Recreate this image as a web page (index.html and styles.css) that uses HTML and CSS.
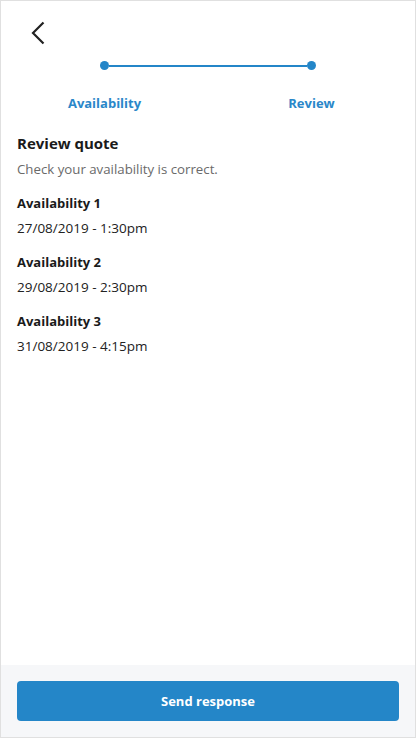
FILE: index.html
```html
<!DOCTYPE html>
<html lang="en">
<head>
<meta charset="utf-8">
<title>Review quote</title>
<link rel="stylesheet" href="styles.css">
</head>
<body>
<div class="page">
  <header class="header">
    <button class="back" aria-label="Back">
      <svg width="14" height="24" viewBox="0 0 14 24" aria-hidden="true">
        <path d="M12.5 1.5 L2 12 L12.5 22.5" fill="none" stroke="#222" stroke-width="2.2"/>
      </svg>
    </button>
    <div class="stepper">
      <span class="dot"></span>
      <span class="line"></span>
      <span class="dot"></span>
    </div>
    <div class="step-labels">
      <span class="step-label">Availability</span>
      <span class="step-label">Review</span>
    </div>
  </header>
  <main class="content">
    <h1 class="title">Review quote</h1>
    <p class="subtitle">Check your availability is correct.</p>
    <div class="list">
      <div class="item">
        <div class="item-title">Availability 1</div>
        <div class="item-date">27/08/2019 - 1:30pm</div>
      </div>
      <div class="item">
        <div class="item-title">Availability 2</div>
        <div class="item-date">29/08/2019 - 2:30pm</div>
      </div>
      <div class="item">
        <div class="item-title">Availability 3</div>
        <div class="item-date">31/08/2019 - 4:15pm</div>
      </div>
    </div>
  </main>
  <footer class="footer">
    <button class="send">Send response</button>
  </footer>
</div>
</body>
</html>
```

FILE: styles.css
```css
* { box-sizing: border-box; }
html, body { margin: 0; padding: 0; }
body {
  font-family: "Open Sans", "Noto Sans", sans-serif;
  color: #1c1c1c;
  background: #fff;
}
.page {
  width: 416px;
  height: 738px;
  border: 1px solid #e0e0e0;
  display: flex;
  flex-direction: column;
  background: #fff;
}
.header {
  display: flex;
  flex-direction: column;
  padding-top: 20px;
}
.back {
  align-self: flex-start;
  margin-left: 30px;
  padding: 0;
  border: 0;
  background: none;
  width: 14px;
  height: 24px;
  display: block;
}
.back svg { display: block; }
.stepper {
  display: flex;
  align-items: center;
  margin: 16px calc(25% - 4.5px) 0;
  height: 9px;
}
.dot {
  width: 9px;
  height: 9px;
  border-radius: 50%;
  background: #2486c8;
  flex: none;
}
.line {
  flex: 1;
  height: 2px;
  background: #2486c8;
}
.step-labels {
  display: grid;
  grid-template-columns: 1fr 1fr;
  margin-top: 24px;
}
.step-label {
  text-align: center;
  font-size: 13px;
  line-height: 18px;
  font-weight: 700;
  color: #2a87c9;
}
.content {
  flex: 1;
  padding: 0 16px;
}
.title {
  margin: 21px 0 0;
  font-size: 15px;
  line-height: 20px;
  font-weight: 700;
  color: #1a1a1a;
}
.subtitle {
  margin: 7px 0 0;
  font-size: 13.25px;
  line-height: 18px;
  color: #6a6a6a;
}
.list {
  display: flex;
  flex-direction: column;
  gap: 16px;
  margin-top: 16px;
}
.item {
  display: flex;
  flex-direction: column;
  gap: 7px;
}
.item-title {
  font-size: 13px;
  line-height: 18px;
  font-weight: 700;
  color: #1a1a1a;
}
.item-date {
  font-size: 13.5px;
  line-height: 18px;
  color: #222;
}
.footer {
  background: #f6f7f9;
  padding: 16px;
}
.send {
  display: block;
  width: 100%;
  height: 40px;
  border: 0;
  border-radius: 4px;
  background: #2486c8;
  color: #fff;
  font-family: inherit;
  font-size: 13px;
  font-weight: 700;
}
```
